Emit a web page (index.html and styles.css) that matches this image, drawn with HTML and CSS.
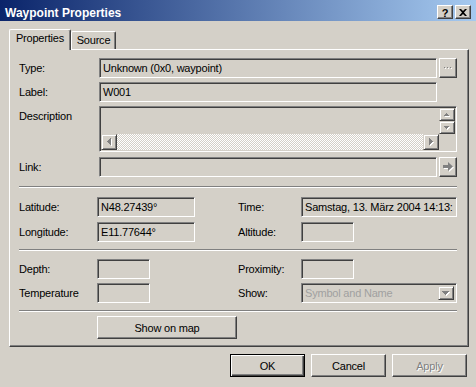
FILE: index.html
```html
<!DOCTYPE html>
<html lang="en">
<head>
    <meta charset="UTF-8">
    <title>Waypoint Properties</title>
    <link rel="stylesheet" href="styles.css">
</head>
<body>
    <div class="window">
        <div class="titlebar">
            <span class="title">Waypoint Properties</span>
            <div class="caption-buttons">
                <div class="cap-btn help">?</div>
                <div class="cap-btn">
                    <svg width="8" height="7" viewBox="0 0 8 7"><path d="M0 0h2l2 2 2-2h2L5 3.5 8 7H6L4 5 2 7H0l3-3.5z" fill="#000"/></svg>
                </div>
            </div>
        </div>

        <div class="client">
            <div class="tabs">
                <div class="tab active">Properties</div>
                <div class="tab">Source</div>
            </div>

            <div class="panel">
                <!-- general -->
                <div class="top-grid">
                    <span class="lbl">Type:</span>
                    <div class="field">Unknown (0x0, waypoint)</div>
                    <div class="raised small-btn">
                        <svg width="9" height="3" viewBox="0 0 9 3"><path d="M1 1h1v1H1zM4 1h1v1H4zM7 1h1v1H7z" fill="#fff"/><path d="M0 0h1v1H0zM3 0h1v1H3zM6 0h1v1H6z" fill="#808080"/></svg>
                    </div>

                    <span class="lbl">Label:</span>
                    <div class="field">W001</div>
                    <span></span>

                    <span class="lbl top">Description</span>
                    <div class="sunken desc">
                        <div class="desc-text"></div>
                        <div class="vscroll">
                            <div class="scroll-btn">
                                <svg width="6" height="4" viewBox="0 0 6 4"><path d="M3 1h1v1h1v1h1v1H1V3h1V2h1z" fill="#fff"/><path d="M2 0h1v1h1v1h1v1H0V2h1V1h1z" fill="#808080"/></svg>
                            </div>
                            <div class="scroll-btn">
                                <svg width="6" height="4" viewBox="0 0 6 4"><path d="M1 1h5v1H5v1H4v1H3V3H2V2H1z" fill="#fff"/><path d="M0 0h5v1H4v1H3v1H2V2H1V1H0z" fill="#808080"/></svg>
                            </div>
                        </div>
                        <div class="hscroll">
                            <div class="scroll-btn">
                                <svg width="5" height="8" viewBox="0 0 5 8"><path d="M4 1h1v7H4V7H3V6H2V5H1V4h1V3h1V2h1z" fill="#fff"/><path d="M3 0h1v7H3V6H2V5H1V4H0V3h1V2h1V1h1z" fill="#808080"/></svg>
                            </div>
                            <div class="track"></div>
                            <div class="scroll-btn">
                                <svg width="5" height="8" viewBox="0 0 5 8"><path d="M1 1h1v1h1v1h1v1h1v1H4v1H3v1H2v1H1z" fill="#fff"/><path d="M0 0h1v1h1v1h1v1h1v1H3v1H2v1H1v1H0z" fill="#808080"/></svg>
                            </div>
                        </div>
                        <div class="corner"></div>
                    </div>

                    <span class="lbl link-lbl">Link:</span>
                    <div class="field link-field"></div>
                    <div class="raised small-btn link-btn">
                        <svg width="11" height="10" viewBox="0 0 11 10"><path d="M1 4h5V1l5 4.5L6 10V7H1z" fill="#fff"/><path d="M0 3h5V0l5 4.5L5 9V6H0z" fill="#808080"/></svg>
                    </div>
                </div>

                <div class="sep sep-first"></div>

                <!-- position -->
                <div class="info-grid">
                    <span class="lbl">Latitude:</span>
                    <div class="field">N48.27439°</div>
                    <span class="lbl right">Time:</span>
                    <div class="field">Samstag, 13. März 2004 14:13:</div>

                    <span class="lbl">Longitude:</span>
                    <div class="field">E11.77644°</div>
                    <span class="lbl right">Altitude:</span>
                    <div class="field short"></div>
                </div>

                <div class="sep sep-second"></div>

                <!-- extras -->
                <div class="info-grid extras">
                    <span class="lbl">Depth:</span>
                    <div class="field short"></div>
                    <span class="lbl right">Proximity:</span>
                    <div class="field short"></div>

                    <span class="lbl">Temperature</span>
                    <div class="field short"></div>
                    <span class="lbl right">Show:</span>
                    <div class="field combo">
                        <span class="combo-text">Symbol and Name</span>
                        <div class="scroll-btn combo-btn">
                            <svg width="8" height="5" viewBox="0 0 8 5"><path d="M1 1h7v1H7v1H6v1H5v1H4V4H3V3H2V2H1z" fill="#fff"/><path d="M0 0h7v1H6v1H5v1H4v1H3V3H2V2H1V1H0z" fill="#808080"/></svg>
                        </div>
                    </div>
                </div>

                <div class="sep sep-third"></div>

                <div class="raised btn map-btn">Show on map</div>
            </div>

            <div class="footer">
                <div class="raised btn default">OK</div>
                <div class="raised btn">Cancel</div>
                <div class="raised btn disabled">Apply</div>
            </div>
        </div>
    </div>
</body>
</html>
```

FILE: styles.css
```css
* {
    box-sizing: border-box;
}
body {
    margin: 0;
    background-color: #d4d0c8;
    font-family: "Liberation Sans", Arial, sans-serif;
    font-size: 11px;
    letter-spacing: -0.2px;
    color: #000;
}
.window {
    width: 476px;
    height: 387px;
    background-color: #d4d0c8;
    overflow: hidden;
}

/* title bar */
.titlebar {
    display: flex;
    justify-content: space-between;
    height: 21px;
    padding: 5px 5px 0 5px;
    background: linear-gradient(to right, #0a246a, #a6caf0);
}
.title {
    color: #fff;
    font-weight: bold;
    font-size: 12px;
    letter-spacing: 0;
    line-height: 16px;
}
.caption-buttons {
    display: flex;
    gap: 2px;
}
.cap-btn {
    width: 16px;
    height: 14px;
    display: flex;
    justify-content: center;
    align-items: center;
    background-color: #d4d0c8;
    border: 1px solid;
    border-color: #fff #404040 #404040 #fff;
    box-shadow: inset -1px -1px #808080;
}
.cap-btn.help {
    font-weight: bold;
    font-size: 11px;
    line-height: 12px;
    padding-top: 1px;
}

/* tabs */
.client {
    padding: 8px 7px 0 9px;
}
.tabs {
    display: flex;
    align-items: flex-end;
}
.tab {
    height: 18px;
    padding-top: 2px;
    line-height: 13px;
    text-align: center;
    border-top: 1px solid #fff;
    border-left: 1px solid #fff;
    border-right: 1px solid #404040;
    box-shadow: inset -1px 0 #808080;
    border-radius: 2px 2px 0 0;
    width: 45px;
}
.tab.active {
    position: relative;
    z-index: 1;
    width: 62px;
    height: 21px;
    margin-bottom: -1px;
    background-color: #d4d0c8;
}

.panel {
    width: 460px;
    height: 298px;
    padding: 8px 11px 0 9px;
    border-top: 1px solid #fff;
    border-left: 1px solid #fff;
    border-right: 1px solid #404040;
    border-bottom: 1px solid #404040;
    box-shadow: inset -1px -1px #808080;
}

/* generic controls */
.lbl {
    line-height: 20px;
    white-space: nowrap;
}
.lbl.top {
    align-self: start;
}
.field,
.sunken {
    border: 1px solid;
    border-color: #808080 #fff #fff #808080;
    box-shadow: inset 1px 1px #404040, inset -1px -1px #d4d0c8;
    background-color: #d4d0c8;
}
.field {
    height: 20px;
    padding: 1px 3px;
    line-height: 16px;
    white-space: nowrap;
    overflow: hidden;
}
.field.short {
    width: 53px;
}
.raised {
    background-color: #d4d0c8;
    border: 1px solid;
    border-color: #fff #404040 #404040 #fff;
    box-shadow: inset -1px -1px #808080;
}
.small-btn {
    height: 20px;
    display: flex;
    justify-content: center;
    align-items: center;
}
.small-btn.link-btn {
    padding-left: 1px;
}
.top-grid .small-btn:first-of-type svg {
    margin-top: 8px;
}
.scroll-btn {
    display: flex;
    justify-content: center;
    align-items: center;
    background-color: #d4d0c8;
    border: 1px solid;
    border-color: #d4d0c8 #404040 #404040 #d4d0c8;
    box-shadow: inset 1px 1px #fff, inset -1px -1px #808080;
}
.sep {
    border-top: 1px solid #808080;
    border-bottom: 1px solid #fff;
}

/* top block */
.top-grid {
    display: grid;
    grid-template-columns: 78px 1fr 18px;
    column-gap: 2px;
    row-gap: 4px;
}
.desc {
    grid-column: 2 / 4;
    height: 46px;
    padding: 1px;
    display: grid;
    grid-template-columns: 1fr 16px;
    grid-template-rows: 1fr 16px;
}
.vscroll {
    display: grid;
    grid-template-rows: 1fr 1fr;
}
.hscroll {
    display: flex;
}
.hscroll .scroll-btn {
    width: 16px;
}
.track {
    flex: 1;
    background: repeating-conic-gradient(#fff 0 25%, #d4d0c8 0 50%) 0 0 / 2px 2px;
}
.link-lbl,
.link-field,
.link-btn {
    margin-top: 1px;
}

.sep-first {
    margin-top: 9px;
}

/* position block */
.info-grid {
    display: grid;
    grid-template-columns: 78px 98px 43px 63px 1fr;
    row-gap: 5px;
    margin-top: 9px;
}
.info-grid .lbl.right {
    grid-column: 4;
}
.sep-second {
    margin-top: 7px;
}
.info-grid.extras {
    margin-top: 8px;
    row-gap: 4px;
}
.combo {
    display: flex;
    padding: 2px;
}
.combo-text {
    flex: 1;
    color: #a0a0a0;
    padding-left: 1px;
    line-height: 15px;
}
.combo-btn {
    width: 16px;
}
.sep-third {
    margin-top: 7px;
}

/* buttons */
.btn {
    height: 23px;
    display: flex;
    justify-content: center;
    align-items: center;
}
.map-btn {
    width: 140px;
    margin: 4px 0 0 78px;
}
.footer {
    display: flex;
    justify-content: flex-end;
    gap: 6px;
    padding: 7px 2px 0 0;
}
.footer .btn {
    width: 75px;
}
.btn.default {
    border-color: #000;
    box-shadow: inset 1px 1px #fff, inset -1px -1px #404040, inset -2px -2px #808080;
}
.btn.disabled {
    color: #808080;
    text-shadow: 1px 1px #fff;
}
```
